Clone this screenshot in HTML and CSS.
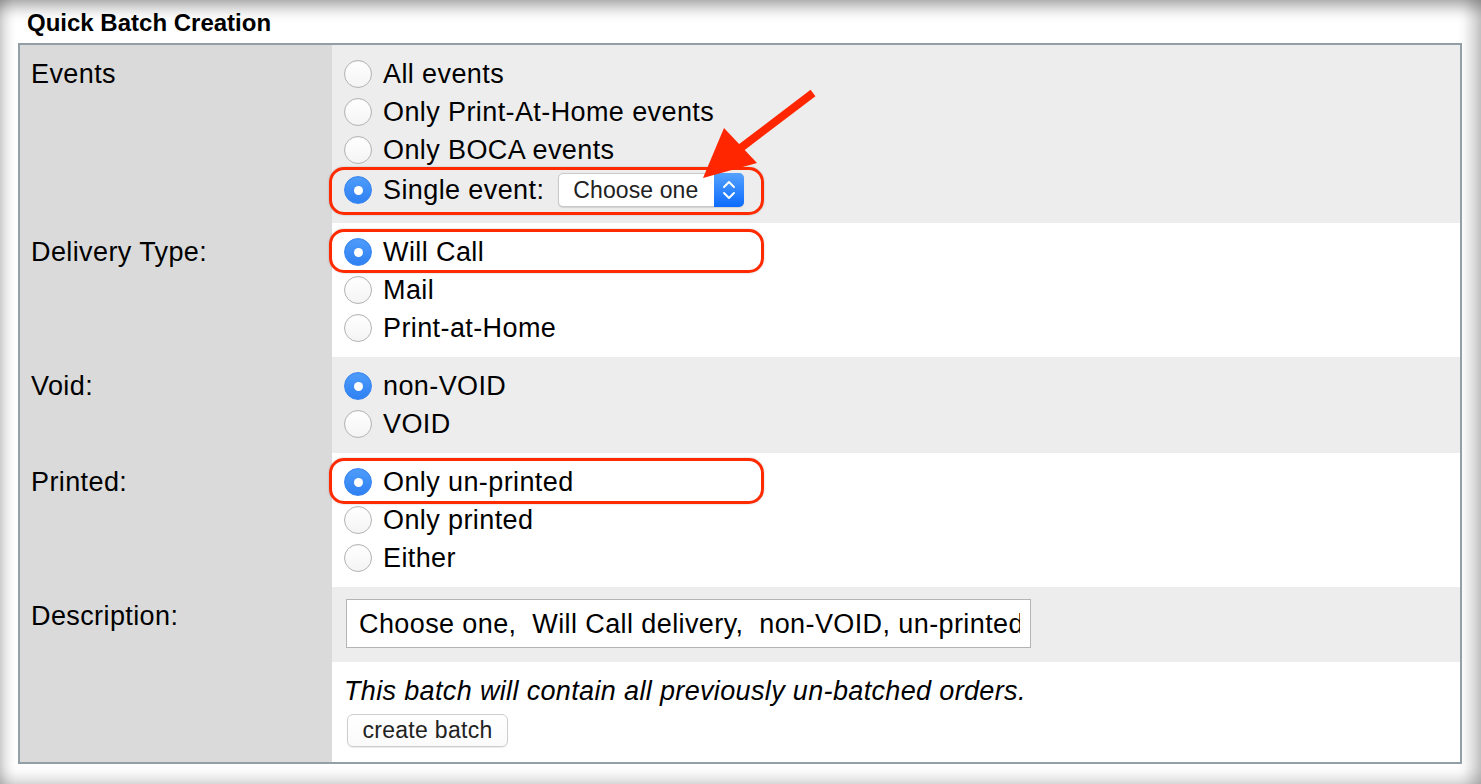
FILE: index.html
```html
<!DOCTYPE html>
<html>
<head>
<meta charset="utf-8">
<link rel="stylesheet" href="styles.css">
</head>
<body>
<div class="page">
  <h1 class="title">Quick Batch Creation</h1>
  <div class="form">
    <div class="label">Events</div>
    <div class="cell gray">
      <div class="opt"><span class="radio"></span>All events</div>
      <div class="opt"><span class="radio"></span>Only Print-At-Home events</div>
      <div class="opt"><span class="radio"></span>Only BOCA events</div>
      <div class="opt opt-select hl hl-a"><span class="radio on"></span>Single event:
        <span class="select">Choose one<span class="stepper"><svg width="16" height="24" viewBox="0 0 16 24"><path d="M3 9 L8 4 L13 9 M3 15 L8 20 L13 15" fill="none" stroke="#fff" stroke-width="1.9" stroke-linecap="round" stroke-linejoin="round"/></svg></span></span>
      </div>
    </div>

    <div class="label">Delivery Type:</div>
    <div class="cell">
      <div class="opt hl hl-b"><span class="radio on"></span>Will Call</div>
      <div class="opt"><span class="radio"></span>Mail</div>
      <div class="opt"><span class="radio"></span>Print-at-Home</div>
    </div>

    <div class="label">Void:</div>
    <div class="cell gray">
      <div class="opt"><span class="radio on"></span>non-VOID</div>
      <div class="opt"><span class="radio"></span>VOID</div>
    </div>

    <div class="label">Printed:</div>
    <div class="cell">
      <div class="opt hl hl-c"><span class="radio on"></span>Only un-printed</div>
      <div class="opt"><span class="radio"></span>Only printed</div>
      <div class="opt"><span class="radio"></span>Either</div>
    </div>

    <div class="label label-tall">Description:</div>
    <div class="cell gray desc">
      <input class="desc-input" type="text" value="Choose one,  Will Call delivery,  non-VOID, un-printed">
    </div>
    <div class="cell last">
      <div class="note">This batch will contain all previously un-batched orders.</div>
      <button class="btn">create batch</button>
    </div>
  </div>
  <svg class="arrow" width="140" height="120" viewBox="690 80 140 120">
    <line x1="813" y1="93" x2="738" y2="150" stroke="#ff2600" stroke-width="8" stroke-linecap="butt"/>
    <polygon points="703,178 724,128 757,163" fill="#ff2600"/>
  </svg>
</div>
</body>
</html>
```

FILE: styles.css
```css
* { box-sizing: border-box; }
html, body { margin: 0; padding: 0; background: #fff; }
body { font-family: "Liberation Sans", Arial, Helvetica, sans-serif; color: #000; }

.page {
  position: relative;
  width: 1481px;
  height: 784px;
  padding: 9px 19px 0 18px;
  background: #fff;
  box-shadow:
    inset 0 16px 14px -8px rgba(0,0,0,0.30),
    inset 14px 0 12px -8px rgba(0,0,0,0.18),
    inset -16px 0 14px -6px rgba(0,0,0,0.22),
    inset 0 -14px 12px -6px rgba(0,0,0,0.12);
}

.title {
  margin: 0 0 6px 9px;
  font-size: 24px;
  line-height: 28px;
  font-weight: bold;
}

.form {
  display: grid;
  grid-template-columns: 312px 1fr;
  border: 2px solid #939fa6;
  background: #dadada;
}

.label {
  background: #dadada;
  padding: 10px 11px;
  font-size: 27px;
  letter-spacing: 0.4px;
  line-height: 38px;
}
.label-tall { grid-row: span 2; }

.cell {
  background: #fff;
  padding: 10px 12px 10px 12px;
}
.cell.gray { background: #ededed; }

.opt {
  display: flex;
  align-items: center;
  height: 38px;
  font-size: 27px;
  letter-spacing: 0.4px;
  white-space: nowrap;
}
.opt-select { height: 42px; margin-bottom: 2px; }

.radio {
  width: 28px;
  height: 28px;
  border-radius: 50%;
  border: 1px solid #b3b3b3;
  background: linear-gradient(#ffffff, #f4f4f4);
  box-shadow: inset 0 1px 1px rgba(0,0,0,0.04);
  margin-right: 11px;
  flex: none;
  position: relative;
}
.radio.on {
  border-color: #3a87f2;
  background: linear-gradient(#4e9cfb, #2f80f3);
}
.radio.on::after {
  content: "";
  position: absolute;
  left: 50%;
  top: 50%;
  width: 9px;
  height: 9px;
  margin: -4.5px 0 0 -4.5px;
  border-radius: 50%;
  background: #fff;
}

.select {
  position: relative;
  display: inline-flex;
  align-items: center;
  margin-left: 14px;
  width: 186px;
  height: 34px;
  padding-left: 14px;
  font-size: 23px;
  letter-spacing: 0.1px;
  color: #222;
  background: #fff;
  border: 1px solid #c9c9c9;
  border-radius: 5px;
  box-shadow: 0 1px 1px rgba(0,0,0,0.12);
}
.stepper {
  position: absolute;
  right: -1px;
  top: -1px;
  bottom: -1px;
  width: 30px;
  border-radius: 0 5px 5px 0;
  background: linear-gradient(#54a2fd, #0c6bff);
  display: flex;
  align-items: center;
  justify-content: center;
}

.hl { position: relative; }
.hl::before {
  content: "";
  position: absolute;
  left: -15px;
  width: 429px;
  border: 3px solid #ff2a00;
  border-radius: 15px;
  box-shadow: 0 0 2px rgba(0,0,0,0.25);
  pointer-events: none;
}
.hl-a::before { top: -2px; bottom: -4px; }
.hl-b::before { top: -4px; bottom: -2px; }
.hl-c::before { top: -5px; bottom: -3px; }

.desc { padding: 12px 12px 14px 14px; }
.desc-input {
  display: block;
  width: 685px;
  height: 49px;
  margin: 0;
  padding: 2px 10px 0 12px;
  border: 1px solid #b4b4b4;
  background: #fff;
  font-family: "Liberation Sans", Arial, Helvetica, sans-serif;
  font-size: 27px;
  letter-spacing: 0.4px;
  color: #000;
  outline: none;
}

.last { padding: 10px 12px 15px 12px; }
.note {
  font-style: italic;
  font-size: 27px;
  letter-spacing: 0.35px;
  line-height: 38px;
  white-space: nowrap;
}
.btn {
  display: block;
  margin: 4px 0 0 3px;
  width: 161px;
  height: 33px;
  padding: 0;
  font-family: "Liberation Sans", Arial, Helvetica, sans-serif;
  font-size: 23px;
  letter-spacing: 0.3px;
  color: #222;
  background: linear-gradient(#ffffff, #fafafa);
  border: 1px solid #cdcdcd;
  border-radius: 6px;
  box-shadow: 0 1px 1px rgba(0,0,0,0.08);
}

.arrow {
  position: absolute;
  left: 690px;
  top: 80px;
  pointer-events: none;
}
```
